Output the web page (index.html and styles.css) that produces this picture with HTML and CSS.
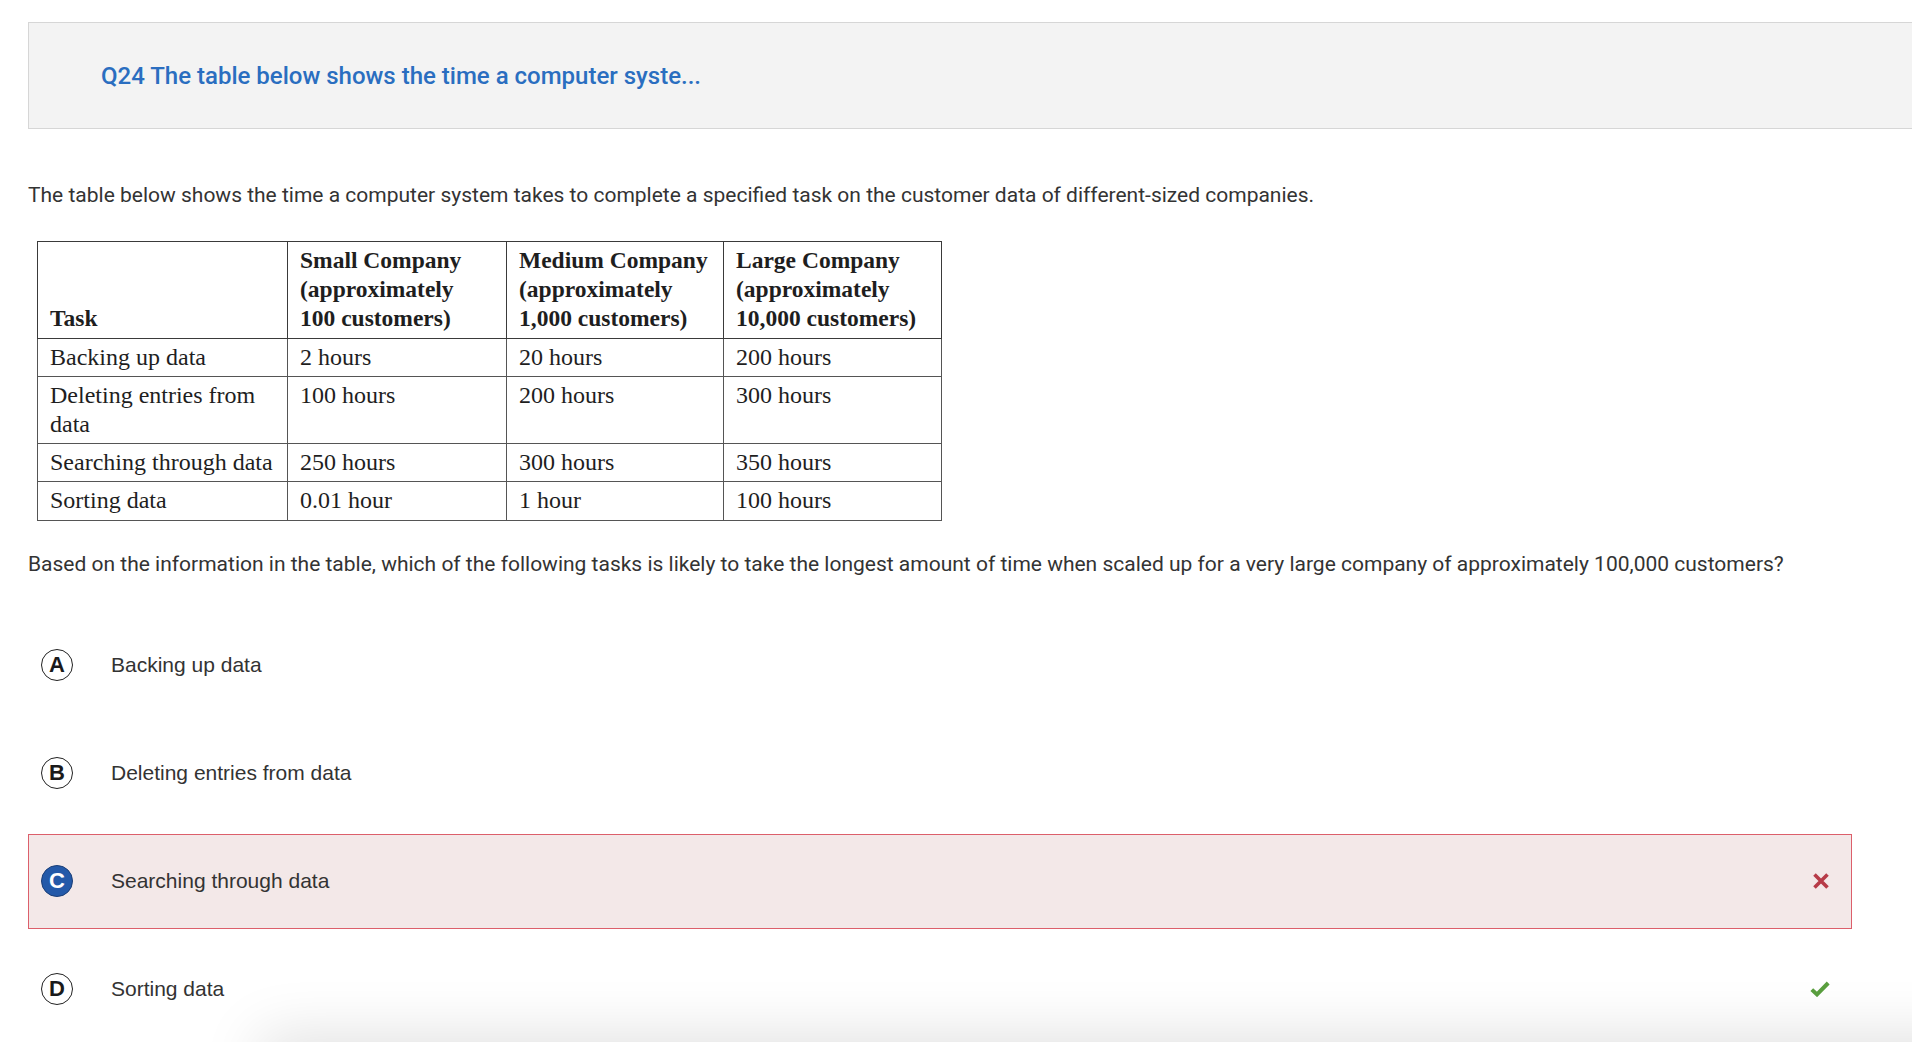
FILE: index.html
```html
<!DOCTYPE html>
<html lang="en">
<head>
<meta charset="utf-8">
<title>Q24</title>
<link rel="stylesheet" href="styles.css">
</head>
<body>
<div class="page">
  <div class="q-header">
    <h2 class="q-title">Q24 The table below shows the time a computer syste...</h2>
  </div>
  <p class="stem">The table below shows the time a computer system takes to complete a specified task on the customer data of different-sized companies.</p>
  <table class="data">
    <colgroup>
      <col class="c1"><col class="c2"><col class="c3"><col class="c4">
    </colgroup>
    <thead>
      <tr>
        <th>Task</th>
        <th>Small Company<br>(approximately<br>100 customers)</th>
        <th>Medium Company<br>(approximately<br>1,000 customers)</th>
        <th>Large Company<br>(approximately<br>10,000 customers)</th>
      </tr>
    </thead>
    <tbody>
      <tr><td>Backing up data</td><td>2 hours</td><td>20 hours</td><td>200 hours</td></tr>
      <tr><td>Deleting entries from<br>data</td><td>100 hours</td><td>200 hours</td><td>300 hours</td></tr>
      <tr><td>Searching through data</td><td>250 hours</td><td>300 hours</td><td>350 hours</td></tr>
      <tr><td>Sorting data</td><td>0.01 hour</td><td>1 hour</td><td>100 hours</td></tr>
    </tbody>
  </table>
  <p class="prompt">Based on the information in the table, which of the following tasks is likely to take the longest amount of time when scaled up for a very large company of approximately 100,000 customers?</p>
  <div class="options">
    <div class="option">
      <span class="letter">A</span>
      <span class="opt-text">Backing up data</span>
    </div>
    <div class="option">
      <span class="letter">B</span>
      <span class="opt-text">Deleting entries from data</span>
    </div>
    <div class="option wrong">
      <span class="letter selected">C</span>
      <span class="opt-text">Searching through data</span>
      <svg class="mark" width="18" height="18" viewBox="0 0 18 18"><path d="M2.5 2.5 L15.5 15.5 M15.5 2.5 L2.5 15.5" stroke="#b73b48" stroke-width="3.6" stroke-linecap="butt" fill="none"/></svg>
    </div>
    <div class="option">
      <span class="letter">D</span>
      <span class="opt-text">Sorting data</span>
      <svg class="mark" width="20" height="16" viewBox="0 0 20 16"><path d="M1.8 8.6 L7 13.4 L18.2 2" stroke="#5a9f3f" stroke-width="4" stroke-linejoin="miter" fill="none"/></svg>
    </div>
  </div>
</div>
<div class="bottom-shade"></div>
</body>
</html>
```

FILE: styles.css
```css
html, body {
  margin: 0;
  padding: 0;
  background: #ffffff;
  overflow: hidden;
}
body {
  font-family: Roboto, "Liberation Sans", Arial, sans-serif;
  color: #333333;
}
.page {
  padding: 22px 0 0 28px;
}
.q-header {
  background: #f3f3f3;
  border: 1px solid #d6d6d6;
  border-right: none;
  display: flex;
  align-items: center;
  padding-left: 72px;
  padding-top: 1px;
  box-sizing: border-box;
  height: 107px;
}
.q-title {
  margin: 0;
  font-family: Roboto, "Liberation Sans", sans-serif;
  font-weight: 500;
  font-size: 24px;
  color: #2a6ec0;
}
.stem {
  margin: 54px 0 0 0;
  font-size: 21px;
  line-height: 24px;
  color: #333;
}
.data {
  margin: 34px 0 0 9px;
  border-collapse: collapse;
  table-layout: fixed;
  width: 904px;
  font-family: "Liberation Serif", "Times New Roman", serif;
  font-size: 24px;
  line-height: 29.2px;
  color: #1e1e1e;
}
.c1 { width: 250px; }
.c2 { width: 219px; }
.c3 { width: 217px; }
.c4 { width: 218px; }
.data th, .data td {
  border: 1.5px solid #3a3a3a;
  padding: 4px 12px 4px 12px;
  text-align: left;
  vertical-align: top;
  white-space: nowrap;
}
.data th {
  font-weight: bold;
  font-size: 23.5px;
  vertical-align: bottom;
}
.data tbody td {
  border-color: #555;
}
.prompt {
  margin: 31px 0 0 0;
  font-size: 21px;
  line-height: 24px;
  color: #333;
}
.options {
  margin-top: 42px;
  width: 1824px;
  display: flex;
  flex-direction: column;
  gap: 13px;
}
.option {
  height: 95px;
  box-sizing: border-box;
  border: 1px solid transparent;
  display: flex;
  align-items: center;
  padding: 0 21px 0 12px;
}
.option.wrong {
  background: #f3e8e8;
  border-color: #dc5f6b;
}
.letter {
  width: 32px;
  height: 32px;
  box-sizing: border-box;
  border: 1.5px solid #222;
  border-radius: 50%;
  display: flex;
  align-items: center;
  justify-content: center;
  font-family: "Liberation Sans", Arial, sans-serif;
  font-weight: bold;
  font-size: 22px;
  color: #1a1a1a;
  flex: none;
}
.letter.selected {
  background: #2359a9;
  border-color: #1b3f78;
  color: #ffffff;
}
.opt-text {
  margin-left: 38px;
  font-family: "Liberation Sans", Arial, sans-serif;
  font-size: 21px;
  color: #333;
  flex: 1;
}
.mark {
  flex: none;
}
.bottom-shade {
  position: fixed;
  left: 260px;
  right: -100px;
  bottom: -60px;
  height: 60px;
  box-shadow: 0 -6px 60px rgba(0, 0, 0, 0.13);
  background: #e4e4e4;
  pointer-events: none;
}
```
